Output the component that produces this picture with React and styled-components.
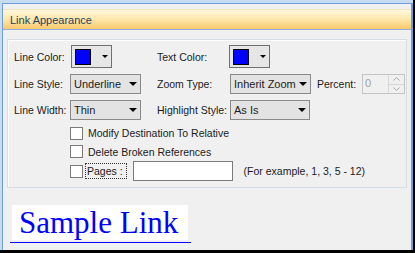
import React from "react";
import styled, { createGlobalStyle } from "styled-components";

const Global = createGlobalStyle`
  html, body { margin: 0; padding: 0; background: #c7dcf3; }
  * { box-sizing: border-box; }
`;

const Frame = styled.div`
  width: 415px;
  height: 253px;
  background: #c7dcf3;
  padding: 3px 0 0 2px;
  border-right: 2px solid #000;
  border-bottom: 3px solid #000;
  display: flex;
  font-family: "Liberation Sans", Arial, sans-serif;
  font-size: 10.5px;
  color: #1b1b1b;
`;

const Window = styled.div`
  flex: 1;
  background: #f0f0f0;
  border-top: 1px solid #6e9dd7;
  border-left: 1px solid #6e9dd7;
  border-right: 2px solid #6e9dd7;
  padding-top: 5px;
  display: flex;
  flex-direction: column;
`;

const TitleBar = styled.div`
  height: 21px;
  padding-left: 7px;
  display: flex;
  align-items: center;
  background: linear-gradient(#fff8de, #fde7a8 50%, #f8c86d);
  border-top: 1px solid #f3e3b8;
  border-bottom: 1px solid #8fb1da;
  color: #243f63;
  font-size: 11px;
`;

const Group = styled.div`
  margin: 9px 4px 0 4px;
  border: 1px solid #d5dde5;
  box-shadow: inset 1px 1px 0 #fff;
  padding: 5px 0 6px 6px;
`;

const Grid = styled.div`
  display: grid;
  grid-template-columns: 56px 87px 73px 87px 45px 43px;
  grid-template-rows: 23px 20px 20px;
  row-gap: 6px;
  align-items: center;
`;

const Label = styled.span`
  white-space: nowrap;
`;

const ColorButton = styled.div`
  width: 41px;
  height: 23px;
  margin-left: ${(p) => p.$shift || 0}px;
  border: 1px solid #707070;
  background: #e6e6e6;
  display: flex;
  align-items: center;
  padding-left: 3px;
  gap: 11px;
`;

const Swatch = styled.div`
  width: 16px;
  height: 16px;
  border: 1px solid #000;
  background: ${(p) => p.$color};
`;

const SmallArrow = styled.div`
  width: 0;
  height: 0;
  border-left: 3px solid transparent;
  border-right: 3px solid transparent;
  border-top: 3px solid #000;
`;

const Select = styled.div`
  width: ${(p) => p.$w}px;
  height: 20px;
  border: 1px solid #8a8a8a;
  background: #e3e3e3;
  display: flex;
  align-items: center;
  justify-content: space-between;
  padding: 0 3px 0 3px;
  font-size: 11px;
`;

const Arrow = styled.div`
  width: 0;
  height: 0;
  border-left: 4px solid transparent;
  border-right: 4px solid transparent;
  border-top: 4px solid #000;
`;

const Spin = styled.div`
  width: 43px;
  height: 20px;
  border: 1px solid #c4c4c4;
  background: #f0f0f0;
  display: flex;
  justify-content: space-between;
  color: #a0a0a0;
  font-size: 11px;
`;

const SpinValue = styled.span`
  padding: 2px 0 0 2px;
`;

const SpinButtons = styled.div`
  width: 16px;
  display: flex;
  flex-direction: column;
  border-left: 1px solid #d6d6d6;
`;

const SpinBtn = styled.div`
  flex: 1;
  display: flex;
  align-items: center;
  justify-content: center;
  border-bottom: ${(p) => (p.$top ? "1px solid #d6d6d6" : "none")};
`;

const Checks = styled.div`
  margin-left: 56px;
  margin-top: 4px;
  display: flex;
  flex-direction: column;
`;

const CheckRow = styled.div`
  display: flex;
  align-items: center;
  height: ${(p) => p.$h}px;
`;

const Box = styled.div`
  width: 13px;
  height: 13px;
  border: 1px solid #7b7b7b;
  background: #fff;
  margin-right: ${(p) => p.$mr}px;
`;

const Focus = styled.span`
  outline: 1px dotted #333;
  padding: 1px 3px 1px 1px;
  margin-right: 7px;
`;

const TextInput = styled.div`
  width: 100px;
  height: 20px;
  border: 1px solid #7a7a7a;
  background: #fff;
  margin-right: 11px;
`;

const SampleWrap = styled.div`
  margin: 17px 0 0 7px;
  width: 181px;
  padding: 0 3px 2px 2px;
  border-bottom: 1px solid #0000ff;
`;

const SampleBox = styled.div`
  height: 35px;
  background: #fff;
  font-family: "Liberation Serif", "Times New Roman", serif;
  font-size: 31px;
  color: #0000ff;
  padding-left: 7px;
  line-height: 35px;
`;

const Chevron = ({ up }) => (
  <svg width="7" height="4" viewBox="0 0 7 4">
    <path
      d={up ? "M0.5 3.5 L3.5 0.5 L6.5 3.5" : "M0.5 0.5 L3.5 3.5 L6.5 0.5"}
      fill="none"
      stroke="#a8a8a8"
      strokeWidth="1"
    />
  </svg>
);

export default function App() {
  return (
    <>
      <Global />
      <Frame>
        <Window>
          <TitleBar>Link Appearance</TitleBar>
          <Group>
            <Grid>
              <Label>Line Color:</Label>
              <ColorButton $shift={1}>
                <Swatch $color="#0000ff" />
                <SmallArrow />
              </ColorButton>
              <Label>Text Color:</Label>
              <ColorButton $shift={-1}>
                <Swatch $color="#0000ff" />
                <SmallArrow />
              </ColorButton>
              <span />
              <span />

              <Label>Line Style:</Label>
              <Select $w={71}>
                Underline
                <Arrow />
              </Select>
              <Label>Zoom Type:</Label>
              <Select $w={81}>
                Inherit Zoom
                <Arrow />
              </Select>
              <Label>Percent:</Label>
              <Spin>
                <SpinValue>0</SpinValue>
                <SpinButtons>
                  <SpinBtn $top>
                    <Chevron up />
                  </SpinBtn>
                  <SpinBtn>
                    <Chevron />
                  </SpinBtn>
                </SpinButtons>
              </Spin>

              <Label>Line Width:</Label>
              <Select $w={71}>
                Thin
                <Arrow />
              </Select>
              <Label>Highlight Style:</Label>
              <Select $w={80}>
                As Is
                <Arrow />
              </Select>
              <span />
              <span />
            </Grid>
            <Checks>
              <CheckRow $h={18}>
                <Box $mr={5} />
                Modify Destination To Relative
              </CheckRow>
              <CheckRow $h={19}>
                <Box $mr={5} />
                Delete Broken References
              </CheckRow>
              <CheckRow $h={20}>
                <Box $mr={3} />
                <Focus>Pages :</Focus>
                <TextInput />
                (For example, 1, 3, 5 - 12)
              </CheckRow>
            </Checks>
          </Group>
          <SampleWrap>
            <SampleBox>Sample Link</SampleBox>
          </SampleWrap>
        </Window>
      </Frame>
    </>
  );
}
